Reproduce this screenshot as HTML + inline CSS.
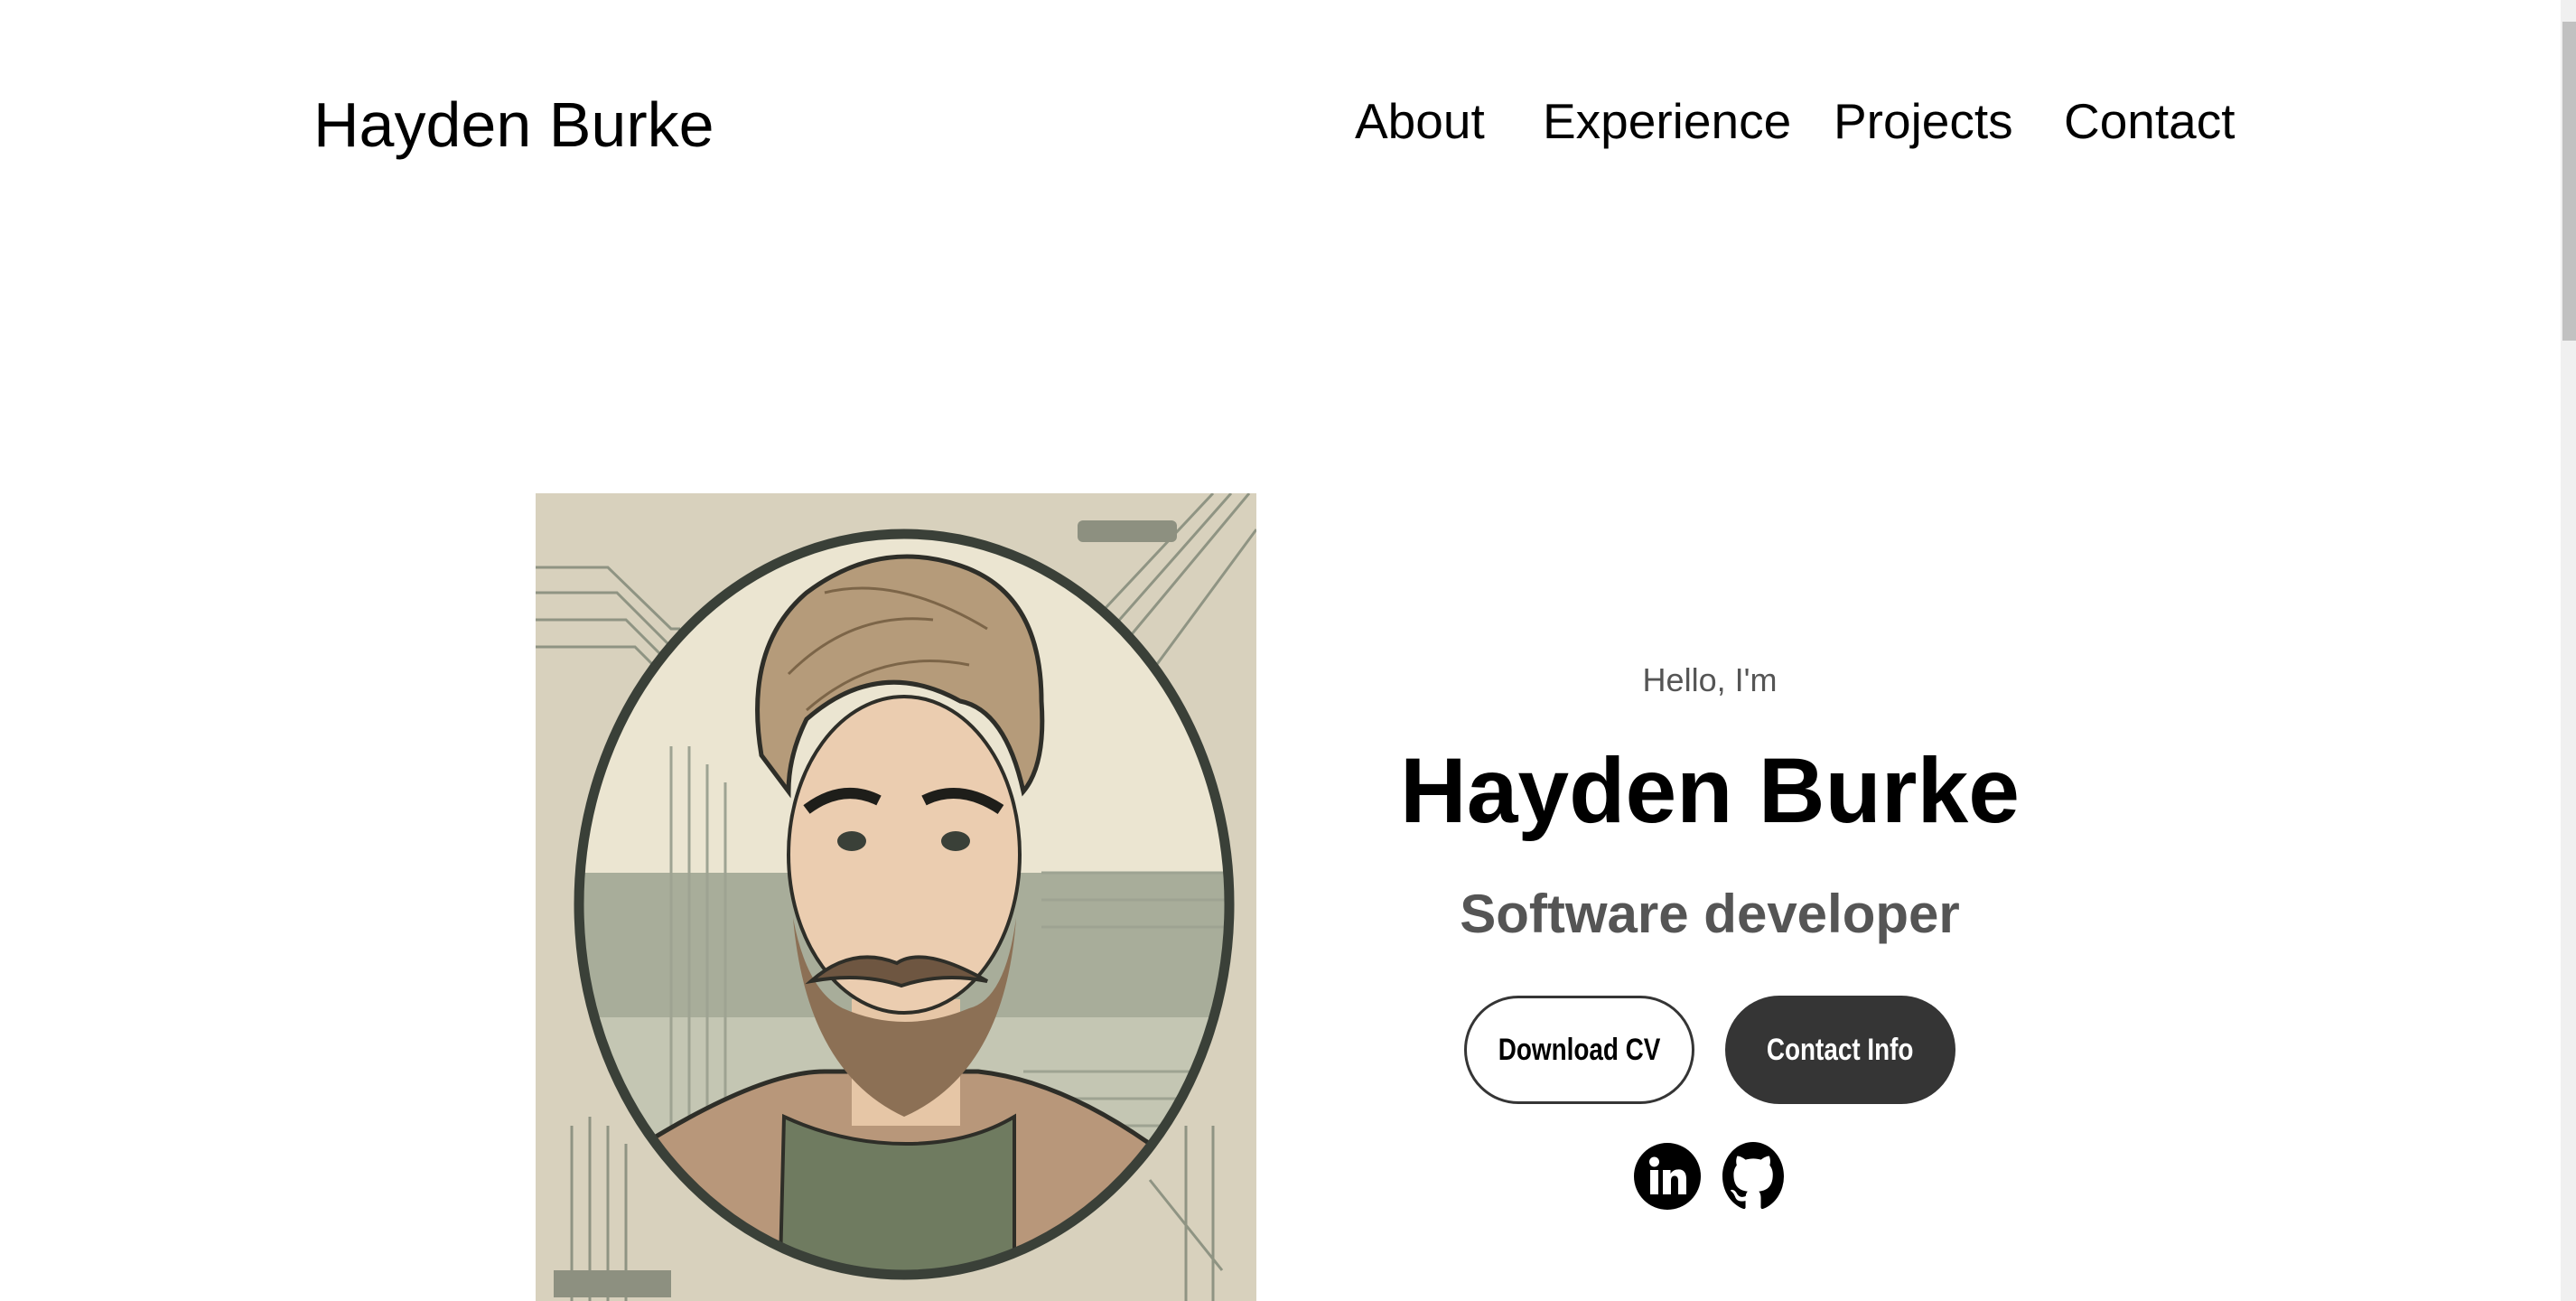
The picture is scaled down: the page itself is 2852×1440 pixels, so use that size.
<!DOCTYPE html>
<html><head><meta charset="utf-8"><style>
html,body{margin:0;padding:0;background:#fff;overflow:hidden}
body{width:2852px;height:1440px;position:relative;font-family:"Liberation Sans",sans-serif;color:#000}
.a{position:absolute;white-space:nowrap}
.logo{left:347px;top:93px;font-size:70px;line-height:90px}
.nav{top:94px;font-size:55px;line-height:80px}
.col{position:absolute;left:1493px;width:800px;text-align:center}
.btn{position:absolute;top:1102px;width:255px;height:120px;border-radius:60px;box-sizing:border-box;display:flex;align-items:center;justify-content:center;font-weight:bold;font-size:34px}
.btn span{display:inline-block;transform:scaleX(.82)}
.sb{position:absolute;left:2835px;top:0;width:17px;height:1440px;background:#f0f0f0}
.th{position:absolute;left:2837px;top:24px;width:15px;height:353px;background:#c1c1c1}
</style></head><body>
<div class="a logo">Hayden Burke</div>
<div class="a nav" style="left:1500px">About</div>
<div class="a nav" style="left:1708px">Experience</div>
<div class="a nav" style="left:2030px">Projects</div>
<div class="a nav" style="left:2285px">Contact</div>

<svg class="a" style="left:593px;top:546px" width="798" height="894" viewBox="0 0 798 894">
<defs><clipPath id="e"><ellipse cx="408" cy="455" rx="360" ry="410"/></clipPath></defs>
<rect width="798" height="894" fill="#d8d1bd"/>
<g stroke="#8f9483" stroke-width="3" fill="none">
<path d="M0 82 H80 L150 150 H160 M0 110 H90 L160 180 M0 140 H100 L170 210 M0 170 H110 L180 240"/>
<path d="M790 0 L640 180 M770 0 L620 170 M750 0 L600 160 M798 40 L680 200"/>
<path d="M40 700 V894 M60 690 V894 M80 700 V894 M100 720 V894"/>
<path d="M720 700 V894 M750 700 V894 M680 760 L760 860"/>
</g>
<g fill="#8d9080"><rect x="600" y="30" width="110" height="24" rx="6"/><rect x="20" y="860" width="130" height="30"/></g>
<g clip-path="url(#e)">
<rect width="798" height="894" fill="#ebe5d1"/>
<rect y="420" width="798" height="160" fill="#a8ad9a"/>
<rect y="580" width="798" height="320" fill="#c4c6b3"/>
<g stroke="#9ea392" stroke-width="3" fill="none"><path d="M150 280V894M170 280V894M190 300V894M210 320V894M560 420H798M560 450H798M560 480H798M540 640H798M540 670H798M540 700H798"/></g>
<path d="M60 894 L120 720 Q250 640 320 640 L490 640 Q580 650 680 720 L740 894Z" fill="#b8977a" stroke="#2e2e28" stroke-width="5"/>
<path d="M270 894 L275 690 Q340 720 410 720 Q480 720 530 690 L530 894Z" fill="#6f7b60" stroke="#2e2e28" stroke-width="4"/>
</g>
<ellipse cx="408" cy="455" rx="360" ry="410" fill="none" stroke="#3a4038" stroke-width="11"/>
<rect x="350" y="560" width="120" height="140" fill="#e6c6a6"/>
<ellipse cx="408" cy="400" rx="128" ry="175" fill="#ebcdb0" stroke="#2e2e28" stroke-width="4"/>
<path d="M285 470 Q300 640 408 690 Q520 640 532 470 Q520 560 480 570 Q408 600 340 570 Q300 550 285 470Z" fill="#8c7055"/>
<path d="M305 540 Q350 500 400 520 Q430 500 500 540 Q450 530 405 545 Q360 530 305 540Z" fill="#6e5641" stroke="#2e2e28" stroke-width="4"/>
<path d="M300 350 Q340 320 380 340 M430 340 Q470 320 515 350" stroke="#1e1e1a" stroke-width="12" fill="none"/>
<ellipse cx="350" cy="385" rx="16" ry="11" fill="#3a4038"/><ellipse cx="465" cy="385" rx="16" ry="11" fill="#3a4038"/>
<path d="M250 290 Q230 170 300 110 Q380 50 470 80 Q560 110 560 230 Q565 300 540 330 Q520 240 470 230 Q380 180 300 250 Q280 290 280 330Z" fill="#b59b7a" stroke="#2e2e28" stroke-width="5"/>
<g stroke="#7c6548" stroke-width="3" fill="none"><path d="M280 200 Q350 130 440 140 M300 240 Q380 170 480 190 M320 110 Q400 90 500 150"/></g>
</svg>

<div class="col" style="top:728px;font-size:36px;line-height:50px;color:#555">Hello, I'm</div>
<div class="col" style="top:810px;font-size:102px;line-height:130px;font-weight:bold">Hayden Burke</div>
<div class="col" style="top:972px;font-size:60px;line-height:80px;font-weight:bold;color:#555">Software developer</div>

<div class="btn" style="left:1621px;border:3px solid #353535;color:#000"><span>Download CV</span></div>
<div class="btn" style="left:1910px;background:#353535;color:#fff"><span>Contact Info</span></div>

<svg class="a" style="left:1808px;top:1264px" width="76" height="76" viewBox="0 0 76 76">
<circle cx="38" cy="38" r="37" fill="#000"/>
<rect x="19" y="31" width="9" height="27" fill="#fff"/><circle cx="23.5" cy="22" r="5.5" fill="#fff"/>
<path d="M33 31h8.5v4c2-3 5-4.6 9-4.6 6 0 8.5 4 8.5 10.5V58h-9V43c0-3.5-1.2-5.5-4-5.5s-4 2-4 5.5V58h-9Z" fill="#fff"/>
</svg>
<svg class="a" style="left:1907px;top:1264px" width="68" height="76" viewBox="0 0 16 16" preserveAspectRatio="none">
<path fill="#000" d="M8 0C3.58 0 0 3.58 0 8c0 3.540 2.290 6.530 5.470 7.590.4.07.55-.17.55-.38 0-.19-.01-.82-.01-1.49-2.01.37-2.530-.49-2.690-.94-.09-.23-.48-.94-.82-1.130-.28-.15-.68-.52-.01-.53.63-.01 1.080.58 1.230.82.72 1.210 1.870.87 2.330.66.07-.52.28-.87.51-1.070-1.780-.2-3.640-.89-3.640-3.950 0-.87.31-1.590.82-2.150-.08-.2-.36-1.020.08-2.120 0 0 .67-.21 2.200.82.64-.18 1.320-.27 2-.27.68 0 1.360.09 2 .27 1.530-1.040 2.200-.82 2.200-.82.44 1.100.16 1.920.08 2.120.51.56.82 1.270.82 2.150 0 3.070-1.870 3.750-3.650 3.950.29.25.54.73.54 1.480 0 1.070-.01 1.930-.01 2.200 0 .21.15.46.55.38A8.013 8.013 0 0 0 16 8c0-4.420-3.580-8-8-8z"/>
</svg>

<div class="sb"></div><div class="th"></div>
</body></html>
